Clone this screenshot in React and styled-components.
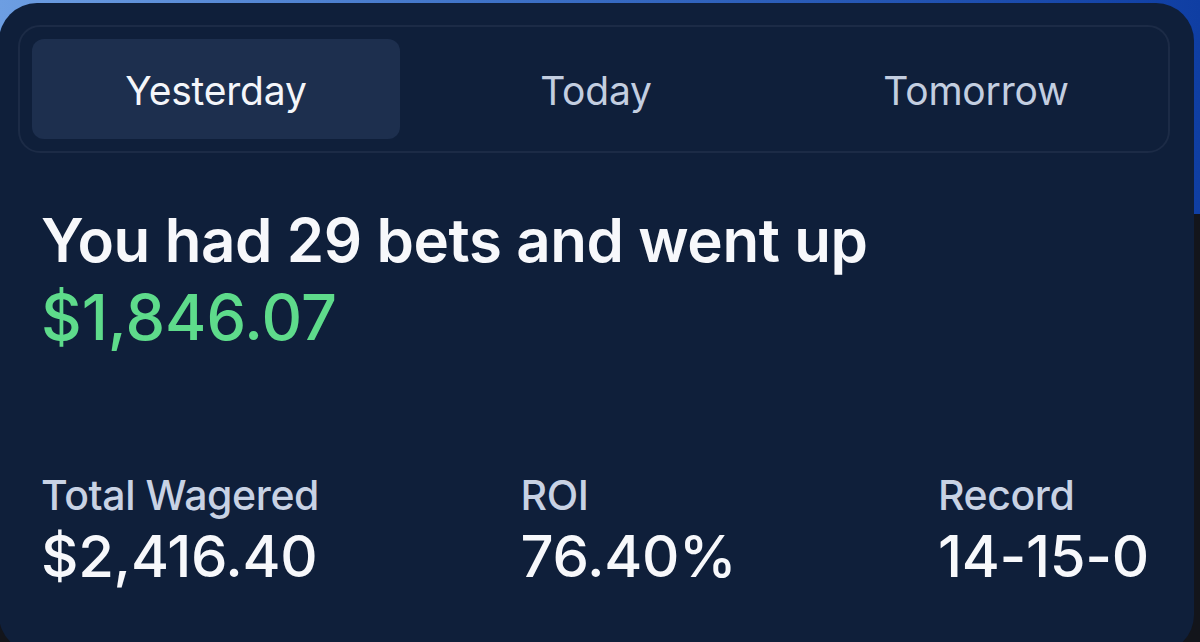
import React, { useState } from "react";
import styled, { createGlobalStyle } from "styled-components";

const Global = createGlobalStyle`
  html, body { margin: 0; padding: 0; }
  body {
    width: 1200px;
    height: 642px;
    overflow: hidden;
    font-family: Inter, "Noto Sans", sans-serif;
    background:
      linear-gradient(to bottom, transparent 214px, #13151b 214px),
      linear-gradient(90deg, #6d9ee2 0%, #3f73c8 40%, #0f3ea3 100%);
  }
`;

const Card = styled.div`
  box-sizing: border-box;
  margin: 3px 0 0 -1px;
  width: 1195px;
  height: 650px;
  background: #0f1f3a;
  border-radius: 38px;
  padding: 22px 24px 0 19px;
  display: flex;
  flex-direction: column;
`;

const Tabs = styled.div`
  box-sizing: border-box;
  height: 128px;
  border: 2px solid #1c2b46;
  border-radius: 22px;
  padding: 12px 12px;
  display: grid;
  grid-template-columns: repeat(3, 1fr);
  gap: 10px;
`;

const Tab = styled.button`
  border: none;
  border-radius: 12px;
  background: ${(p) => (p.$active ? "#1d2f4e" : "transparent")};
  color: ${(p) => (p.$active ? "#f4f6fa" : "#c3cee0")};
  font-family: Inter, "Noto Sans", sans-serif;
  font-size: 39px;
  font-weight: 400;
  letter-spacing: -0.2px;
  cursor: pointer;
  padding: 2px 0 0 ${(p) => p.$shift}px;
`;

const Body = styled.div`
  padding: 50px 0 0 23px;
  display: flex;
  flex-direction: column;
  flex: 1;
`;

const Headline = styled.h1`
  margin: 0;
  font-size: 60px;
  font-weight: 600;
  color: #f7f8fb;
  letter-spacing: -0.4px;
  line-height: 74px;
`;

const Amount = styled.div`
  font-size: 63px;
  font-weight: 500;
  color: #5edb8b;
  letter-spacing: 0;
  line-height: 80px;
`;

const Stats = styled.div`
  margin-top: 113px;
  display: flex;
  justify-content: space-between;
  padding-right: 21px;
`;

const Stat = styled.div`
  display: flex;
  flex-direction: column;
`;

const Label = styled.div`
  font-size: 41px;
  font-weight: 500;
  color: #c8d2e4;
  letter-spacing: -0.4px;
  line-height: 50px;
`;

const Value = styled.div`
  font-size: 58px;
  font-weight: 500;
  color: #f7f8fb;
  letter-spacing: -0.3px;
  line-height: 72px;
`;

export default function App() {
  const [tab, setTab] = useState(0);
  const tabs = ["Yesterday", "Today", "Tomorrow"];
  const stats = [
    ["Total Wagered", "$2,416.40"],
    ["ROI", "76.40%"],
    ["Record", "14-15-0"],
  ];
  return (
    <>
      <Global />
      <Card>
        <Tabs>
          {tabs.map((t, i) => (
            <Tab key={t} $active={i === tab} $shift={i * 4} onClick={() => setTab(i)}>
              {t}
            </Tab>
          ))}
        </Tabs>
        <Body>
          <Headline>You had 29 bets and went up</Headline>
          <Amount>$1,846.07</Amount>
          <Stats>
            {stats.map(([l, v]) => (
              <Stat key={l}>
                <Label>{l}</Label>
                <Value>{v}</Value>
              </Stat>
            ))}
          </Stats>
        </Body>
      </Card>
    </>
  );
}
